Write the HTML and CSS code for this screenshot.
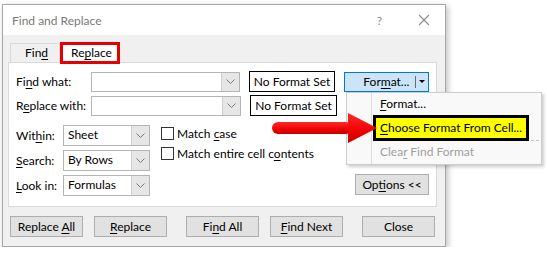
FILE: index.html
```html
<!DOCTYPE html>
<html lang="en">
<head>
    <meta charset="UTF-8">
    <title>Find and Replace</title>
    <link rel="stylesheet" href="styles.css">
</head>
<body>
    <div class="dialog">
        <div class="titlebar">
            <span class="title">Find and Replace</span>
            <span class="help">?</span>
            <svg class="close-x" width="12" height="12" viewBox="0 0 12 12"><path d="M1 1L11 11M11 1L1 11" stroke="#8a8a8a" stroke-width="1.1" fill="none"/></svg>
        </div>

        <div class="dialog-body">
            <div class="tabs">
                <div class="tab">Fin<u>d</u></div>
                <div class="tab tab-active">Re<u>p</u>lace</div>
            </div>

            <div class="panel">
                <div class="row">
                    <span class="label label-wide">Fi<u>n</u>d what:</span>
                    <div class="combo combo-wide"><span class="combo-text"></span><span class="combo-btn"><svg width="9" height="5" viewBox="0 0 9 5"><path d="M0.5 0.5L4.5 4.5L8.5 0.5" stroke="#7a7a7a" fill="none"/></svg></span></div>
                    <div class="format-box">No Format Set</div>
                    <div class="split-btn"><span>For<u>m</u>at...</span><span class="split-sep"></span><span class="split-arrow"></span></div>
                </div>
                <div class="row row-second">
                    <span class="label label-wide">R<u>e</u>place with:</span>
                    <div class="combo combo-wide"><span class="combo-text"></span><span class="combo-btn"><svg width="9" height="5" viewBox="0 0 9 5"><path d="M0.5 0.5L4.5 4.5L8.5 0.5" stroke="#7a7a7a" fill="none"/></svg></span></div>
                    <div class="format-box">No Format Set</div>
                </div>

                <div class="lower">
                    <div class="options-col">
                        <div class="row">
                            <span class="label label-short">Wit<u>h</u>in:</span>
                            <div class="combo combo-short"><span class="combo-text">Sheet</span><span class="combo-btn"><svg width="9" height="5" viewBox="0 0 9 5"><path d="M0.5 0.5L4.5 4.5L8.5 0.5" stroke="#7a7a7a" fill="none"/></svg></span></div>
                        </div>
                        <div class="row">
                            <span class="label label-short"><u>S</u>earch:</span>
                            <div class="combo combo-short"><span class="combo-text">By Rows</span><span class="combo-btn"><svg width="9" height="5" viewBox="0 0 9 5"><path d="M0.5 0.5L4.5 4.5L8.5 0.5" stroke="#7a7a7a" fill="none"/></svg></span></div>
                        </div>
                        <div class="row">
                            <span class="label label-short"><u>L</u>ook in:</span>
                            <div class="combo combo-short"><span class="combo-text">Formulas</span><span class="combo-btn"><svg width="9" height="5" viewBox="0 0 9 5"><path d="M0.5 0.5L4.5 4.5L8.5 0.5" stroke="#7a7a7a" fill="none"/></svg></span></div>
                        </div>
                    </div>

                    <div class="check-col">
                        <div class="check"><span class="check-box"></span><span>Match <u>c</u>ase</span></div>
                        <div class="check"><span class="check-box"></span><span>Match entire cell c<u>o</u>ntents</span></div>
                    </div>

                    <div class="btn btn-options">Op<u>t</u>ions &lt;&lt;</div>
                </div>
            </div>

            <div class="button-row">
                <div class="btn">Replace <u>A</u>ll</div>
                <div class="btn btn-gap-s"><u>R</u>eplace</div>
                <div class="btn btn-gap-l">Fi<u>n</u>d All</div>
                <div class="btn btn-gap-s"><u>F</u>ind Next</div>
                <div class="btn btn-gap-l">Close</div>
            </div>
        </div>
    </div>

    <!-- dropdown menu of the Format button -->
    <div class="menu">
        <div class="menu-items">
            <div class="menu-item"><u>F</u>ormat...</div>
            <div class="menu-choose-row">
                <div class="menu-choose"><u>C</u>hoose Format From Cell...</div>
            </div>
            <div class="menu-item menu-item-disabled">Clea<u>r</u> Find Format</div>
        </div>
    </div>

    <!-- red callout arrow -->
    <svg class="callout" width="116" height="40" viewBox="0 0 116 40">
        <defs>
            <linearGradient id="red" x1="0" y1="0" x2="0" y2="1">
                <stop offset="0" stop-color="#ff2a2a"/>
                <stop offset="0.6" stop-color="#f00000"/>
                <stop offset="1" stop-color="#c40000"/>
            </linearGradient>
        </defs>
        <rect x="7" y="14" width="80" height="12" rx="6" fill="url(#red)"/>
        <polygon points="83,5 112,20 83,35" fill="url(#red)"/>
    </svg>
</body>
</html>
```

FILE: styles.css
```css
/* Page */
body {
    margin: 0;
    padding: 4px 0 0 2px;
    background-color: #ffffff;
    font-family: Lato, "Noto Sans", sans-serif;
    font-size: 12px;
    color: #000;
    white-space: nowrap;
}

u {
    text-decoration-thickness: 1px;
    text-underline-offset: 2px;
}

/* Dialog window */
.dialog {
    width: 444px;
    height: 243px;
    box-sizing: border-box;
    border: 1px solid #a6a6a6;
    background-color: #f0f0f0;
    box-shadow: 2px 2px 6px rgba(0, 0, 0, 0.25);
}

.titlebar {
    height: 30px;
    background-color: #ffffff;
    display: flex;
    align-items: center;
    padding-left: 9px;
}

.title {
    color: #7a7a7a;
    flex: 1;
}

.help {
    color: #8a8a8a;
    margin-right: 36px;
}

.close-x {
    margin-right: 15px;
}

.dialog-body {
    padding: 8px 7px 0 5px;
}

/* Tabs */
.tabs {
    display: flex;
    margin-left: 2px;
    height: 19px;
    position: relative;
    z-index: 1;
}

.tab {
    width: 50px;
    height: 19px;
    box-sizing: border-box;
    border: 1px solid #d9d9d9;
    border-bottom: none;
    padding-left: 14px;
    line-height: 18px;
}

.tab-active {
    width: 60px;
    height: 22px;
    margin-top: -1px;
    border: 3px solid #e60000;
    background-color: #ffffff;
    padding-left: 8px;
    line-height: 16px;
}

/* Tab page */
.panel {
    width: 429px;
    height: 145px;
    box-sizing: border-box;
    border: 1px solid #d9d9d9;
    background-color: #ffffff;
    padding: 8px 7px 0 7px;
}

.row {
    display: flex;
    align-items: center;
    height: 21px;
}

.row-second {
    margin-top: 3px;
}

.label-wide {
    width: 75px;
}

.label-short {
    width: 47px;
}

/* Combo boxes */
.combo {
    height: 20px;
    box-sizing: border-box;
    border: 1px solid #b4b4b4;
    display: flex;
    background-color: #ffffff;
}

.combo-wide {
    width: 150px;
}

.combo-short {
    width: 87px;
    height: 21px;
}

.combo-text {
    flex: 1;
    padding-left: 4px;
    line-height: 18px;
}

.combo-btn {
    width: 17px;
    background-color: #e6e6e6;
    border-left: 1px solid #cfcfcf;
    display: flex;
    align-items: center;
    justify-content: center;
}

.format-box {
    width: 87px;
    height: 21px;
    box-sizing: border-box;
    border: 1px solid #000;
    margin-left: 9px;
    text-align: center;
    line-height: 19px;
}

.split-btn {
    width: 85px;
    height: 20px;
    box-sizing: border-box;
    margin-left: 9px;
    border: 1px solid #0078d7;
    background-color: #cce4f7;
    display: flex;
    align-items: center;
    padding-left: 18px;
}

.split-sep {
    width: 1px;
    height: 12px;
    background-color: #6a6a6a;
    margin-left: auto;
}

.split-arrow {
    margin: 0 3px 0 3px;
    border-left: 3px solid transparent;
    border-right: 3px solid transparent;
    border-top: 3px solid #000;
}

/* Lower part of the tab page */
.lower {
    display: flex;
    margin-top: 9px;
}

.options-col {
    display: flex;
    flex-direction: column;
    gap: 4px;
}

.check-col {
    margin-left: 11px;
    display: flex;
    flex-direction: column;
    gap: 4px;
}

.check {
    display: flex;
    align-items: center;
    height: 16px;
}

.check-box {
    width: 13px;
    height: 13px;
    box-sizing: border-box;
    border: 1px solid #333;
    background-color: #fff;
    margin-right: 3px;
}

/* Buttons */
.btn {
    width: 73px;
    height: 21px;
    box-sizing: border-box;
    border: 1px solid #adadad;
    background-color: #e1e1e1;
    text-align: center;
    line-height: 19px;
}

.btn-options {
    margin-left: auto;
    align-self: flex-end;
    width: 74px;
    margin-bottom: 1px;
}

.button-row {
    display: flex;
    margin-top: 9px;
    padding-left: 2px;
}

.btn-gap-s {
    margin-left: 11px;
}

.btn-gap-l {
    margin-left: 20px;
}

.button-row .btn-gap-s + .btn-gap-l {
    margin-left: 19px;
}

/* Dropdown menu */
.menu {
    position: absolute;
    left: 346px;
    top: 92px;
    width: 196px;
    height: 73px;
    box-sizing: border-box;
    border: 1px solid #cccccc;
    background-color: #f9f9f9;
    box-shadow: 2px 2px 3px rgba(0, 0, 0, 0.2);
    z-index: 2;
}

.menu-items {
    margin-left: 24px;
    height: 100%;
    border-left: 1px solid #dcdcdc;
}

.menu-item {
    height: 22px;
    line-height: 22px;
    padding-left: 8px;
}

.menu-item-disabled {
    color: #a0a0a0;
    height: 23px;
}

.menu-choose-row {
    height: 25px;
    margin-left: 1px;
    margin-right: 2px;
    border-bottom: 1px dashed #c4c4c4;
}

.menu-choose {
    width: 156px;
    height: 26px;
    box-sizing: border-box;
    border: 3px solid #000;
    background-color: #ffff00;
    padding-left: 4px;
    line-height: 20px;
    position: relative;
}

/* Red arrow pointing at the menu item */
.callout {
    position: absolute;
    left: 265px;
    top: 108px;
    z-index: 3;
}
```
